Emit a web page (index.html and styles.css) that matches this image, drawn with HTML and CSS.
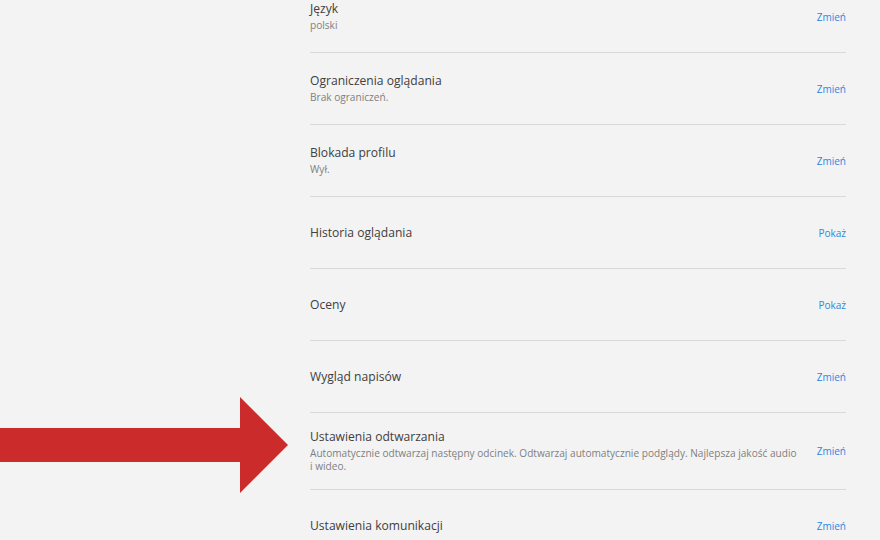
FILE: index.html
```html
<!DOCTYPE html>
<html lang="pl">
<head>
<meta charset="utf-8">
<title>Ustawienia profilu</title>
<link rel="stylesheet" href="styles.css">
</head>
<body>
<main class="page">
  <ul class="settings">
    <li class="row">
      <div class="info"><div class="title">Język</div><div class="desc">polski</div></div>
      <a class="action" href="#">Zmień</a>
    </li>
    <li class="row">
      <div class="info"><div class="title">Ograniczenia oglądania</div><div class="desc">Brak ograniczeń.</div></div>
      <a class="action" href="#">Zmień</a>
    </li>
    <li class="row">
      <div class="info"><div class="title">Blokada profilu</div><div class="desc">Wył.</div></div>
      <a class="action" href="#">Zmień</a>
    </li>
    <li class="row">
      <div class="info"><div class="title">Historia oglądania</div></div>
      <a class="action" href="#">Pokaż</a>
    </li>
    <li class="row">
      <div class="info"><div class="title">Oceny</div></div>
      <a class="action" href="#">Pokaż</a>
    </li>
    <li class="row">
      <div class="info"><div class="title">Wygląd napisów</div></div>
      <a class="action" href="#">Zmień</a>
    </li>
    <li class="row row-tall">
      <div class="info"><div class="title">Ustawienia odtwarzania</div><div class="desc">Automatycznie odtwarzaj następny odcinek. Odtwarzaj automatycznie podglądy. Najlepsza jakość audio i wideo.</div></div>
      <a class="action" href="#">Zmień</a>
    </li>
    <li class="row">
      <div class="info"><div class="title">Ustawienia komunikacji</div></div>
      <a class="action" href="#">Zmień</a>
    </li>
  </ul>
</main>
<svg class="arrow" width="290" height="100" viewBox="0 0 290 100" aria-hidden="true">
  <polygon points="0,31 240,31 240,0 288,48 240,96 240,65 0,65" fill="#cc2b2b"/>
</svg>
</body>
</html>
```
FILE: styles.css
```css
html, body {
  margin: 0;
  padding: 0;
  background: #f3f3f3;
  overflow: hidden;
}
body {
  width: 880px;
  height: 540px;
  position: relative;
  font-family: "Open Sans", "Liberation Sans", Arial, sans-serif;
}
.page {
  padding-left: 310px;
  width: 536px;
}
.settings {
  list-style: none;
  margin: -19px 0 0 0;
  padding: 0;
}
.row {
  display: flex;
  align-items: center;
  box-sizing: border-box;
  border-bottom: 1px solid #d9d9d9;
  min-height: 72px;
}
.row-tall {
  padding: 16px 0 16px;
}
.info {
  flex: 1;
  min-width: 0;
  padding-right: 20px;
}
.title {
  font-size: 12.1px;
  line-height: 16px;
  color: #404040;
}
.desc {
  font-size: 10.1px;
  line-height: 13px;
  color: #808080;
  margin-top: 2px;
}
.action {
  font-size: 10px;
  color: #2b87e3;
  text-decoration: none;
  white-space: nowrap;
}
.arrow {
  position: absolute;
  left: 0;
  top: 397px;
}
```
